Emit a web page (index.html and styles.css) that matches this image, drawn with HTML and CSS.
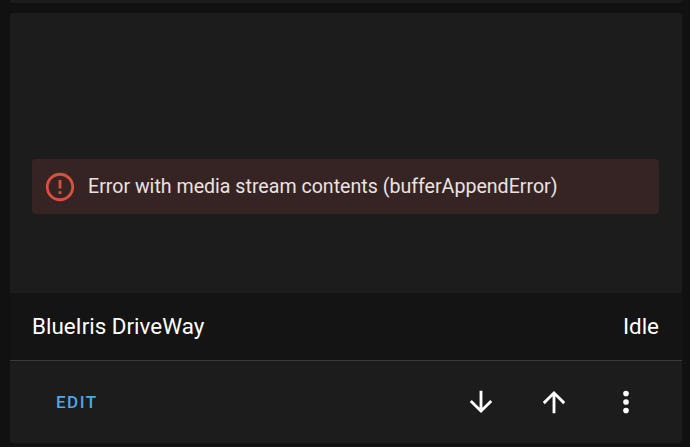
FILE: index.html
```html
<!DOCTYPE html>
<html lang="en">
<head>
<meta charset="utf-8">
<title>BlueIris DriveWay</title>
<link rel="stylesheet" href="styles.css">
</head>
<body>
<div class="prev-card"></div>
<section class="card">
  <div class="media">
    <div class="alert">
      <svg class="alert-icon" viewBox="0 0 24 24"><path fill="currentColor" d="M11 15h2v2h-2zm0-8h2v6h-2zm.99-5C6.47 2 2 6.48 2 12s4.47 10 9.99 10C17.52 22 22 17.52 22 12S17.52 2 11.99 2zM12 20c-4.42 0-8-3.58-8-8s3.58-8 8-8 8 3.58 8 8-3.58 8-8 8z"/></svg>
      <span class="alert-text">Error with media stream contents (bufferAppendError)</span>
    </div>
  </div>
  <div class="caption">
    <span>BlueIris DriveWay</span>
    <span>Idle</span>
  </div>
  <div class="actions">
    <span class="edit">EDIT</span>
    <div class="icons">
      <svg class="icon" viewBox="0 0 24 24"><path fill="currentColor" d="M11 4h2v12l5.5-5.5 1.42 1.42L12 19.84l-7.92-7.92L5.5 10.5 11 16V4z"/></svg>
      <svg class="icon" viewBox="0 0 24 24"><path fill="currentColor" d="M13 20h-2V8l-5.5 5.5-1.42-1.42L12 4.16l7.92 7.92-1.42 1.42L13 8v12z"/></svg>
      <svg class="icon" viewBox="0 0 24 24"><path fill="currentColor" d="M12 16a2 2 0 1 1 0 4 2 2 0 0 1 0-4zm0-6a2 2 0 1 1 0 4 2 2 0 0 1 0-4zm0-6a2 2 0 1 1 0 4 2 2 0 0 1 0-4z"/></svg>
    </div>
  </div>
</section>
</body>
</html>
```

FILE: styles.css
```css
* { box-sizing: border-box; }
html, body { margin: 0; height: 100%; }
body {
  background: #111111;
  font-family: Roboto, "Liberation Sans", sans-serif;
  color: #ffffff;
  overflow: hidden;
}
.prev-card {
  height: 3px;
  margin: 0 8px 0 10px;
  background: #1c1c1c;
  border-radius: 0 0 4px 4px;
}
.card {
  margin: 10px 8px 0 10px;
  height: 430px;
  background: #1c1c1c;
  border-radius: 4px;
  overflow: hidden;
  display: flex;
  flex-direction: column;
}
.media {
  height: 280px;
  padding: 146px 23px 0 22px;
}
.alert {
  height: 55px;
  background: #352423;
  border-radius: 4px;
  display: flex;
  align-items: center;
  padding-left: 11px;
  color: #ebe2e0;
}
.alert-icon {
  width: 34px;
  height: 34px;
  color: #db4f3f;
  flex: none;
}
.alert-text {
  margin-left: 11px;
  font-size: 19.6px;
}
.caption {
  height: 68px;
  background: #141414;
  display: flex;
  justify-content: space-between;
  align-items: center;
  padding: 0 23px 2px 22px;
  font-size: 22.4px;
  border-bottom: 1px solid #3b3b3b;
}
.actions {
  flex: 1;
  display: flex;
  justify-content: space-between;
  align-items: center;
  padding: 0 39px 0 46px;
}
.edit {
  color: #48a9ec;
  font-size: 17px;
  font-weight: 500;
  letter-spacing: 1.5px;
}
.icons {
  display: flex;
  gap: 38.5px;
  align-items: center;
}
.icon {
  width: 34px;
  height: 34px;
  color: #ffffff;
}
```
